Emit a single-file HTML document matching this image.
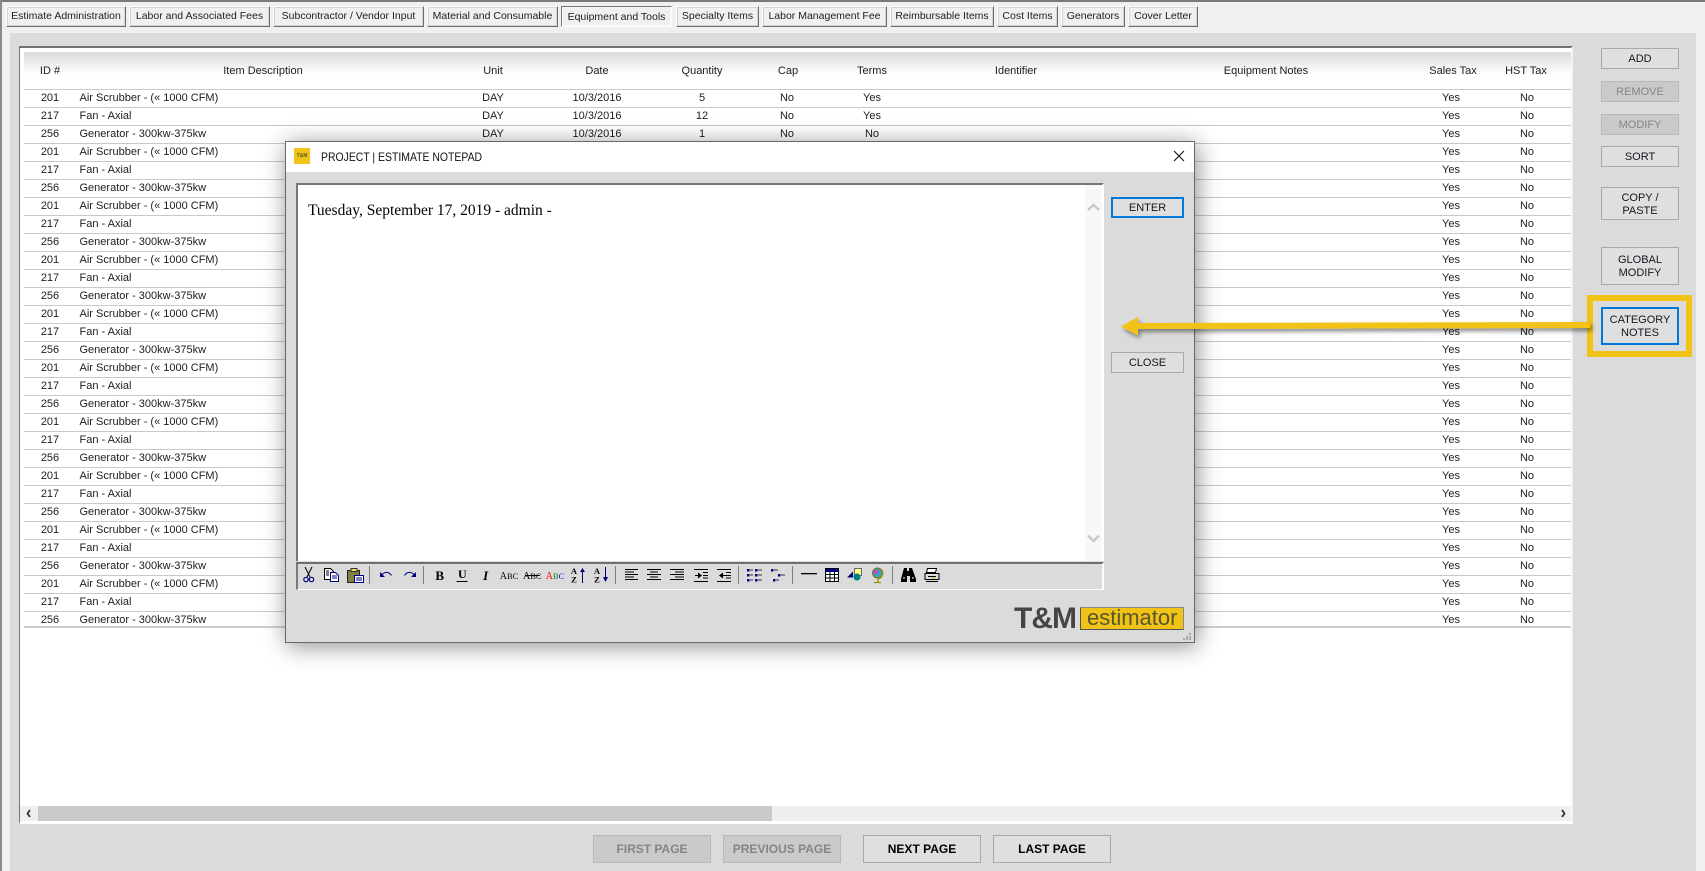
<!DOCTYPE html>
<html><head><meta charset="utf-8"><title>Estimate</title>
<style>
html,body{margin:0;padding:0}
body{width:1705px;height:871px;position:relative;overflow:hidden;background:#f0f0f0;font-family:"Liberation Sans",sans-serif;color:#1c1c24}
div,span{position:absolute;box-sizing:border-box}
.tab{top:6px;height:21px;background:#f0f0f0;border:1px solid;border-color:#fdfdfd #6e6e6e #6e6e6e #fdfdfd;outline:1px solid #d4d4d4;outline-offset:-2px;font-size:10.5px;line-height:19px;text-align:center;white-space:nowrap}
.btn{left:1601px;width:78px;background:#dfdfdf;border:1px solid #a9a9a9;font-size:11px;line-height:13px;text-align:center;display:flex;align-items:center;justify-content:center;color:#15151f;padding-top:2px}
.off{background:#cacaca;color:#858585;border-color:#b8b8b8}
.blue{border:2px solid #0078d7}
.pg{top:835px;width:118px;height:28px;font-weight:bold;font-size:12px;line-height:26px;text-align:center;background:#dfdfdf;border:1px solid #a9a9a9;color:#000}
.r{left:21px;width:1550px;height:18px;border-bottom:1px solid #c9c9c9;font-size:11px;line-height:17px;white-space:nowrap}
.r span{top:0;text-align:center}
.i{left:9px;width:40px}.d{left:58.5px;text-align:left!important}.u{left:452px;width:40px}.dt{left:540px;width:72px}.q{left:661px;width:40px}.c{left:746px;width:40px}.t{left:831px;width:40px}.y{left:1410px;width:40px}.n{left:1486px;width:40px}
.h{top:64px;font-size:11px;line-height:15px;width:120px;text-align:center;white-space:nowrap}
</style></head><body>
<div style="left:0;top:0;width:1705px;height:2px;background:#7a7a7a"></div>
<div style="left:0;top:0;width:2px;height:871px;background:#8a8a8a"></div>

<div class="tab" style="left:6px;width:120px">Estimate Administration</div>
<div class="tab" style="left:129px;width:141px">Labor and Associated Fees</div>
<div class="tab" style="left:273px;width:151px">Subcontractor / Vendor Input</div>
<div class="tab" style="left:427px;width:131px">Material and Consumable</div>
<div class="tab" style="left:561px;width:111px;border-color:#777 #fff #fff #777;outline-color:#f8f8f8;line-height:20px">Equipment and Tools</div>
<div class="tab" style="left:676px;width:83px">Specialty Items</div>
<div class="tab" style="left:762px;width:125px">Labor Management Fee</div>
<div class="tab" style="left:890px;width:104px">Reimbursable Items</div>
<div class="tab" style="left:997px;width:61px">Cost Items</div>
<div class="tab" style="left:1061px;width:64px">Generators</div>
<div class="tab" style="left:1128px;width:70px">Cover Letter</div>

<div style="left:10px;top:33px;width:1686px;height:838px;background:#dbdbdb"></div>

<div style="left:19px;top:46px;width:1554px;height:778px;background:#fff;border-top:2px solid #707070;border-left:1px solid #777;border-right:2px solid #f4f4f4;border-bottom:2px solid #fff"></div>
<div style="left:24px;top:52px;width:1547px;height:22px;background:linear-gradient(#dadada,#fff)"></div>
<div style="left:24px;top:89px;width:1547px;height:1px;background:#c9c9c9"></div>

<div class="h" style="left:-10px">ID #</div>
<div class="h" style="left:203px">Item Description</div>
<div class="h" style="left:433px">Unit</div>
<div class="h" style="left:537px">Date</div>
<div class="h" style="left:642px">Quantity</div>
<div class="h" style="left:728px">Cap</div>
<div class="h" style="left:812px">Terms</div>
<div class="h" style="left:956px">Identifier</div>
<div class="h" style="left:1206px">Equipment Notes</div>
<div class="h" style="left:1393px">Sales Tax</div>
<div class="h" style="left:1466px">HST Tax</div>

<div class="r" style="top:90px"><span class="i">201</span><span class="d">Air Scrubber - (« 1000 CFM)</span><span class="u">DAY</span><span class="dt">10/3/2016</span><span class="q">5</span><span class="c">No</span><span class="t">Yes</span><span class="y">Yes</span><span class="n">No</span></div>
<div class="r" style="top:108px"><span class="i">217</span><span class="d">Fan - Axial</span><span class="u">DAY</span><span class="dt">10/3/2016</span><span class="q">12</span><span class="c">No</span><span class="t">Yes</span><span class="y">Yes</span><span class="n">No</span></div>
<div class="r" style="top:126px"><span class="i">256</span><span class="d">Generator - 300kw-375kw</span><span class="u">DAY</span><span class="dt">10/3/2016</span><span class="q">1</span><span class="c">No</span><span class="t">No</span><span class="y">Yes</span><span class="n">No</span></div>
<div class="r" style="top:144px"><span class="i">201</span><span class="d">Air Scrubber - (« 1000 CFM)</span><span class="y">Yes</span><span class="n">No</span></div>
<div class="r" style="top:162px"><span class="i">217</span><span class="d">Fan - Axial</span><span class="y">Yes</span><span class="n">No</span></div>
<div class="r" style="top:180px"><span class="i">256</span><span class="d">Generator - 300kw-375kw</span><span class="y">Yes</span><span class="n">No</span></div>
<div class="r" style="top:198px"><span class="i">201</span><span class="d">Air Scrubber - (« 1000 CFM)</span><span class="y">Yes</span><span class="n">No</span></div>
<div class="r" style="top:216px"><span class="i">217</span><span class="d">Fan - Axial</span><span class="y">Yes</span><span class="n">No</span></div>
<div class="r" style="top:234px"><span class="i">256</span><span class="d">Generator - 300kw-375kw</span><span class="y">Yes</span><span class="n">No</span></div>
<div class="r" style="top:252px"><span class="i">201</span><span class="d">Air Scrubber - (« 1000 CFM)</span><span class="y">Yes</span><span class="n">No</span></div>
<div class="r" style="top:270px"><span class="i">217</span><span class="d">Fan - Axial</span><span class="y">Yes</span><span class="n">No</span></div>
<div class="r" style="top:288px"><span class="i">256</span><span class="d">Generator - 300kw-375kw</span><span class="y">Yes</span><span class="n">No</span></div>
<div class="r" style="top:306px"><span class="i">201</span><span class="d">Air Scrubber - (« 1000 CFM)</span><span class="y">Yes</span><span class="n">No</span></div>
<div class="r" style="top:324px"><span class="i">217</span><span class="d">Fan - Axial</span><span class="y">Yes</span><span class="n">No</span></div>
<div class="r" style="top:342px"><span class="i">256</span><span class="d">Generator - 300kw-375kw</span><span class="y">Yes</span><span class="n">No</span></div>
<div class="r" style="top:360px"><span class="i">201</span><span class="d">Air Scrubber - (« 1000 CFM)</span><span class="y">Yes</span><span class="n">No</span></div>
<div class="r" style="top:378px"><span class="i">217</span><span class="d">Fan - Axial</span><span class="y">Yes</span><span class="n">No</span></div>
<div class="r" style="top:396px"><span class="i">256</span><span class="d">Generator - 300kw-375kw</span><span class="y">Yes</span><span class="n">No</span></div>
<div class="r" style="top:414px"><span class="i">201</span><span class="d">Air Scrubber - (« 1000 CFM)</span><span class="y">Yes</span><span class="n">No</span></div>
<div class="r" style="top:432px"><span class="i">217</span><span class="d">Fan - Axial</span><span class="y">Yes</span><span class="n">No</span></div>
<div class="r" style="top:450px"><span class="i">256</span><span class="d">Generator - 300kw-375kw</span><span class="y">Yes</span><span class="n">No</span></div>
<div class="r" style="top:468px"><span class="i">201</span><span class="d">Air Scrubber - (« 1000 CFM)</span><span class="y">Yes</span><span class="n">No</span></div>
<div class="r" style="top:486px"><span class="i">217</span><span class="d">Fan - Axial</span><span class="y">Yes</span><span class="n">No</span></div>
<div class="r" style="top:504px"><span class="i">256</span><span class="d">Generator - 300kw-375kw</span><span class="y">Yes</span><span class="n">No</span></div>
<div class="r" style="top:522px"><span class="i">201</span><span class="d">Air Scrubber - (« 1000 CFM)</span><span class="y">Yes</span><span class="n">No</span></div>
<div class="r" style="top:540px"><span class="i">217</span><span class="d">Fan - Axial</span><span class="y">Yes</span><span class="n">No</span></div>
<div class="r" style="top:558px"><span class="i">256</span><span class="d">Generator - 300kw-375kw</span><span class="y">Yes</span><span class="n">No</span></div>
<div class="r" style="top:576px"><span class="i">201</span><span class="d">Air Scrubber - (« 1000 CFM)</span><span class="y">Yes</span><span class="n">No</span></div>
<div class="r" style="top:594px"><span class="i">217</span><span class="d">Fan - Axial</span><span class="y">Yes</span><span class="n">No</span></div>
<div class="r" style="top:612px;height:16px;border-bottom:2px solid #cfcfcf"><span class="i">256</span><span class="d">Generator - 300kw-375kw</span><span class="y">Yes</span><span class="n">No</span></div>
<div style="left:20px;top:90px;width:4px;height:540px;background:#fff"></div>

<div style="left:20px;top:806px;width:1551px;height:15px;background:#efefef"></div>
<div style="left:38px;top:806px;width:734px;height:15px;background:#c9c9c9"></div>
<svg style="position:absolute;left:0;top:0" width="1705" height="871" fill="none"><path d="M30 810l-2.500 3.500 2.500 3.500M1562 810l2.500 3.500-2.500 3.500" stroke="#333" stroke-width="1.800"/></svg>

<div class="pg" style="left:593px;background:#cacaca;color:#858585;border-color:#b8b8b8">FIRST PAGE</div>
<div class="pg" style="left:723px;background:#cacaca;color:#858585;border-color:#b8b8b8">PREVIOUS PAGE</div>
<div class="pg" style="left:863px">NEXT PAGE</div>
<div class="pg" style="left:993px">LAST PAGE</div>

<div class="btn" style="top:48px;height:21px">ADD</div>
<div class="btn off" style="top:81px;height:21px">REMOVE</div>
<div class="btn off" style="top:114px;height:21px">MODIFY</div>
<div class="btn" style="top:146px;height:21px">SORT</div>
<div class="btn" style="top:187px;height:33px">COPY /<br>PASTE</div>
<div class="btn" style="top:247px;height:38px">GLOBAL<br>MODIFY</div>
<div class="btn blue" style="top:307px;height:38px">CATEGORY<br>NOTES</div>
<div style="left:1587px;top:295px;width:105px;height:62px;border:6px solid #f1c316"></div>

<!-- Dialog -->
<div style="left:285px;top:141px;width:910px;height:502px;background:#dbdbdb;border:1px solid #686868;box-shadow:2px 3px 22px rgba(0,0,0,.45)">
</div>
<div style="left:286px;top:142px;width:908px;height:30px;background:#fff"></div>
<div style="left:294px;top:148px;width:16px;height:16px;background:#f1c316;color:#5a5a30;font-size:5px;font-weight:bold;line-height:16px;text-align:center">T&amp;M</div>
<div style="left:321px;top:150px;font-size:12px;line-height:15px;white-space:nowrap;color:#111;transform:scaleX(.87);transform-origin:0 0">PROJECT | ESTIMATE NOTEPAD</div>
<svg style="position:absolute;left:1173px;top:150px" width="12" height="12" fill="none"><path d="M1 1l10 10M11 1L1 11" stroke="#111" stroke-width="1.100"/></svg>

<div style="left:296px;top:183px;width:808px;height:378px;background:#fff;border-top:2px solid #777;border-left:2px solid #777;border-right:2px solid #fff"></div>
<div style="left:1085px;top:185px;width:17px;height:376px;background:#f8f8f8"></div>
<div style="left:308px;top:201px;font-family:'Liberation Serif',serif;font-size:15.500px;line-height:19px;color:#000;white-space:nowrap">Tuesday, September 17, 2019 - admin -</div>
<svg style="position:absolute;left:0;top:0" width="1705" height="871" fill="none">
<path d="M1088 210l5.500-5 5.500 5M1088 535.500l5.500 5.500 5.500-5.500" stroke="#c9c9c9" stroke-width="2.500"/>
</svg>

<div style="left:296px;top:562px;width:808px;height:28px;border-top:2px solid #6f6f6f;border-left:2px solid #7a7a7a;border-bottom:1px solid #fff;border-right:2px solid #fff"></div>

<div class="btn blue" style="left:1111px;top:197px;width:73px;height:21px">ENTER</div>
<div class="btn" style="left:1111px;top:352px;width:73px;height:21px">CLOSE</div>

<div style="left:1014px;top:603px;font-weight:bold;font-size:30px;line-height:32px;color:#454545;letter-spacing:-1px;white-space:nowrap">T&amp;M</div>
<div style="left:1080px;top:607px;width:104px;height:23px;background:#f1c316;border:1px solid #555;border-top-color:#8a8a8a;border-right-color:#8a8a8a;font-size:22px;line-height:19px;color:#58552f;padding-left:6px;white-space:nowrap">estimator</div>

<!-- Toolbar icons & arrow -->
<svg style="position:absolute;left:0;top:0" width="1705" height="871" fill="none">
<g stroke="#808080"><path d="M369.500 566v18M423.500 566v18M615.500 566v18M738.500 566v18M792.500 566v18M892.500 566v18"/></g>
<!-- cut -->
<path d="M305 567l5 10M312 567l-5 10" stroke="#000"/><circle cx="306" cy="579.500" r="2.200" stroke="#000080" stroke-width="1.200"/><circle cx="311.500" cy="579.500" r="2.200" stroke="#000080" stroke-width="1.200"/>
<!-- copy -->
<path d="M324.500 568.500h6l3 3v8h-9z" fill="#fff" stroke="#000"/><path d="M326 571h3M326 573h3M326 575h3" stroke="#000"/><path d="M330.500 572.500h5l3 3v6h-8z" fill="#fff" stroke="#000080"/><path d="M332 576h5M332 578h5" stroke="#000080"/>
<!-- paste -->
<rect x="347.500" y="570.500" width="12" height="12" fill="#808040" stroke="#222"/><rect x="351" y="568.500" width="6" height="3" fill="#f0e060" stroke="#333"/><rect x="354.500" y="575.500" width="9" height="7" fill="#fff" stroke="#000080"/><path d="M356 578h6M356 580h6" stroke="#000080"/>
<!-- undo redo -->
<path d="M382 574.500c3-3 7-3 9.500 1" stroke="#000080" stroke-width="1"/><path d="M380 572v5h5z" fill="#000080"/>
<path d="M414 574.500c-3-3-7-3-9.500 1" stroke="#000080" stroke-width="1"/><path d="M416 572v5h-5z" fill="#000080"/>
<!-- text style -->
<g fill="#000" font-family="'Liberation Serif',serif" text-anchor="middle">
<text x="439.700" y="580" font-size="13" font-weight="bold">B</text>
<text x="462.300" y="578" font-size="12" font-weight="bold">U</text>
<text x="485.700" y="580" font-size="13" font-weight="bold" font-style="italic">I</text>
<text x="509" y="579" font-size="10">A<tspan font-size="8.500">BC</tspan></text>
<text x="532.300" y="579" font-size="10">A<tspan font-size="8.500">BC</tspan></text>
<text x="555" y="579" font-size="10"><tspan fill="#f00">A</tspan><tspan fill="#080" font-size="8.500">B</tspan><tspan fill="#00f" font-size="8.500">C</tspan></text>
<text x="574" y="574" font-size="8.500" font-weight="bold">A</text><text x="574" y="582.500" font-size="8.500" font-weight="bold">Z</text>
<text x="597" y="574" font-size="8.500" font-weight="bold">A</text><text x="597" y="582.500" font-size="8.500" font-weight="bold">Z</text>
</g>
<path d="M456.500 581.500h11M525 575.500h15" stroke="#000"/>
<path d="M582.500 572v11M605.500 567v10" stroke="#000080"/><path d="M580 572h5l-2.500-4zM603 577h5l-2.500 5z" fill="#000080"/>
<!-- align -->
<g stroke="#000">
<path d="M625 569.500h13M625 572h9M625 574.500h13M625 577h9M625 579.500h13"/>
<path d="M647 569.500h14M650 572h8M647 574.500h14M650 577h8M647 579.500h14"/>
<path d="M670 569.500h14M675 572h9M670 574.500h14M675 577h9M670 579.500h14"/>
<path d="M694 569.500h14M703 572.500h5M703 575.500h5M703 578h5M694 581.500h14"/>
<path d="M717 569.500h14M726 572.500h5M726 575.500h5M726 578h5M717 581.500h14"/>
<path d="M695 575.500h4M727 575.500h-5" />
</g>
<path d="M698 572.500v6l4-3zM723 572.500v6l-4-3z" fill="#000"/>
<!-- lists -->
<g fill="#000080">
<rect x="747" y="569" width="2.500" height="2.500"/><rect x="747" y="574" width="2.500" height="2.500"/><rect x="747" y="579" width="2.500" height="2.500"/>
<rect x="755" y="569" width="2.500" height="2.500"/><rect x="755" y="574" width="2.500" height="2.500"/><rect x="755" y="579" width="2.500" height="2.500"/>
<rect x="771" y="569" width="2.500" height="2.500"/><rect x="778" y="574" width="2.500" height="2.500"/><rect x="773" y="579" width="2.500" height="2.500"/>
</g>
<path d="M750 570h3M750 575h3M750 580h3M758 570h4M758 575h4M758 580h4M774 570h4M781 575h4M776 580h3" stroke="#333"/>
<!-- hr -->
<path d="M801 573.500h16" stroke="#000"/><path d="M801 574.500h16" stroke="#999"/>
<!-- table -->
<rect x="825.500" y="568.500" width="13" height="13" fill="#fff" stroke="#000"/><rect x="826" y="569" width="12" height="3" fill="#000080"/><path d="M825.500 574.500h13M825.500 578h13M830 572v9M834.500 572v9" stroke="#000"/>
<!-- shape -->
<rect x="854.500" y="568.500" width="7" height="7" fill="#ffff80" stroke="#666"/><path d="M847 577.500l6-6v6z" fill="#000080"/><circle cx="857" cy="577" r="3.500" fill="#008080"/>
<!-- globe -->
<circle cx="877.500" cy="573" r="5" fill="#40a0c0" stroke="#807000"/><circle cx="876" cy="572" r="2" fill="#d040c0"/><path d="M882 570c2 4 0 8-4 9M878 579v3M874 582.500h7" stroke="#a09000" stroke-width="1.300"/>
<!-- binoculars -->
<path d="M904 568h3v3h2v-3h3l4 11v3h-6v-6h-3v6h-6v-3z" fill="#000"/><path d="M903 578h2M912 578h2" stroke="#fff"/>
<!-- printer -->
<path d="M927.500 568.500h9l-1 4h-9z" fill="#fff" stroke="#000"/><path d="M925 573.500h14v6h-14z" fill="#ddd" stroke="#000"/><path d="M926 581.500h12" stroke="#000"/><path d="M928 576.500h8" stroke="#000"/><rect x="932" y="577" width="3" height="1.500" fill="#e0c000"/>
<!-- grip -->
<g fill="#a8a8a8"><rect x="1189" y="633" width="2" height="2"/><rect x="1186" y="636" width="2" height="2"/><rect x="1189" y="636" width="2" height="2"/><rect x="1183" y="638" width="2" height="2"/><rect x="1186" y="638" width="2" height="2"/><rect x="1189" y="638" width="2" height="2"/></g>
<defs><filter id="s" x="-5%" y="-50%" width="110%" height="220%"><feDropShadow dx="2" dy="3" stdDeviation="2" flood-color="#000" flood-opacity=".45"/></filter></defs>
<path d="M1121 326.500l17-9.500v6l452-1v6l-452 1v6.500z" fill="#f1c316" filter="url(#s)"/>
</svg>
</body></html>
